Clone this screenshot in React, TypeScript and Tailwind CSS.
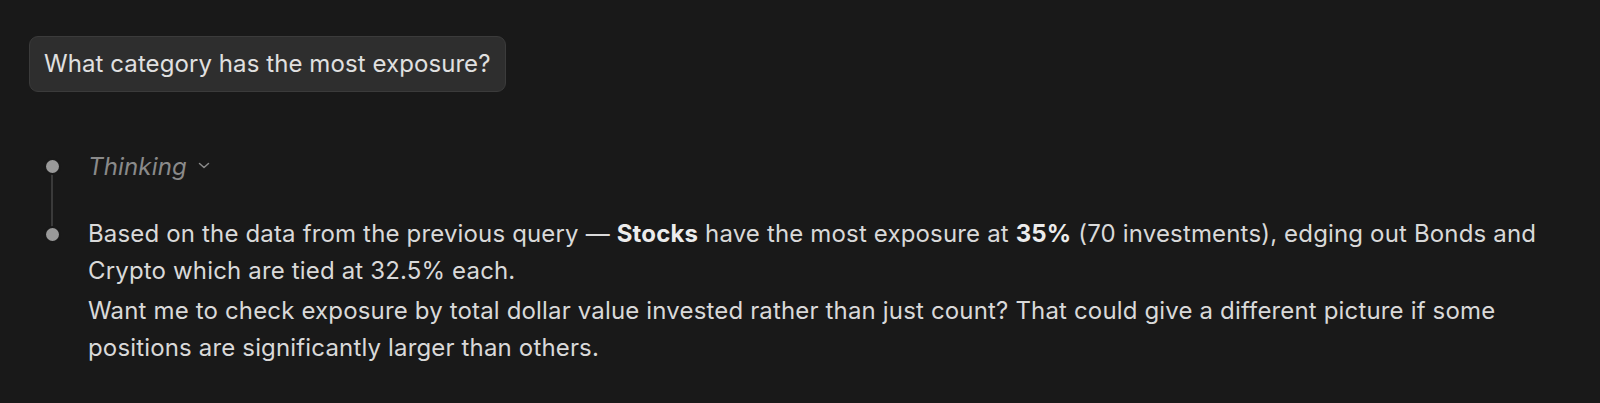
import React from 'react';

const font = { fontFamily: 'Inter, "Noto Sans", sans-serif' };

function Chevron() {
  return (
    <svg width="12" height="7" viewBox="0 0 12 7" fill="none" className="ml-[11px] mt-[-2px]">
      <path d="M1.5 1.5L6 5.5L10.5 1.5" stroke="#8a8a8a" strokeWidth="1.5" strokeLinecap="round" strokeLinejoin="round" />
    </svg>
  );
}

function Dot() {
  return <span className="block w-[13px] h-[13px] rounded-full bg-[#9a9a9a] ring-2 ring-[#191919]" />;
}

export default function App() {
  return (
    <div className="w-[1600px] h-[403px] bg-[#191919] text-[#d9d9d9] overflow-hidden tracking-[0.16px]" style={font}>
      <div className="pl-[29px] pr-[32px] pt-[36px]">
        <div className="inline-flex items-center h-[56px] px-[14px] rounded-[9px] bg-[#2e2e2e] border border-[#3b3b3b] text-[24px] leading-[32px] tracking-[0.08px] text-[#e0e0e0]">
          What category has the most exposure?
        </div>

        <div className="relative mt-[56px] text-[24px] leading-[37px]">
          <div className="absolute left-[22px] top-[19px] h-[68px] w-[2px] bg-[#3a3a3a]" />

          <div className="flex items-center">
            <div className="w-[46px] flex justify-center relative">
              <Dot />
            </div>
            <div className="flex items-center h-[37px] ml-[13px] italic text-[#8a8a8a]">
              Thinking
              <Chevron />
            </div>
          </div>

          <div className="flex mt-[30px]">
            <div className="w-[46px] flex justify-center pt-[13px] relative">
              <div>
                <Dot />
              </div>
            </div>
            <div className="ml-[13px] flex-1">
              <p>
                Based on the data from the previous query — <b className="font-bold text-[#ececec]">Stocks</b> have the most
                exposure at <b className="font-bold text-[#ececec]">35%</b> (70 investments), edging out Bonds and Crypto
                which are tied at 32.5% each.
              </p>
              <p className="mt-[3px]">
                Want me to check exposure by total dollar value invested rather than just count? That could give a
                different picture if some positions are significantly larger than others.
              </p>
            </div>
          </div>
        </div>
      </div>
    </div>
  );
}
